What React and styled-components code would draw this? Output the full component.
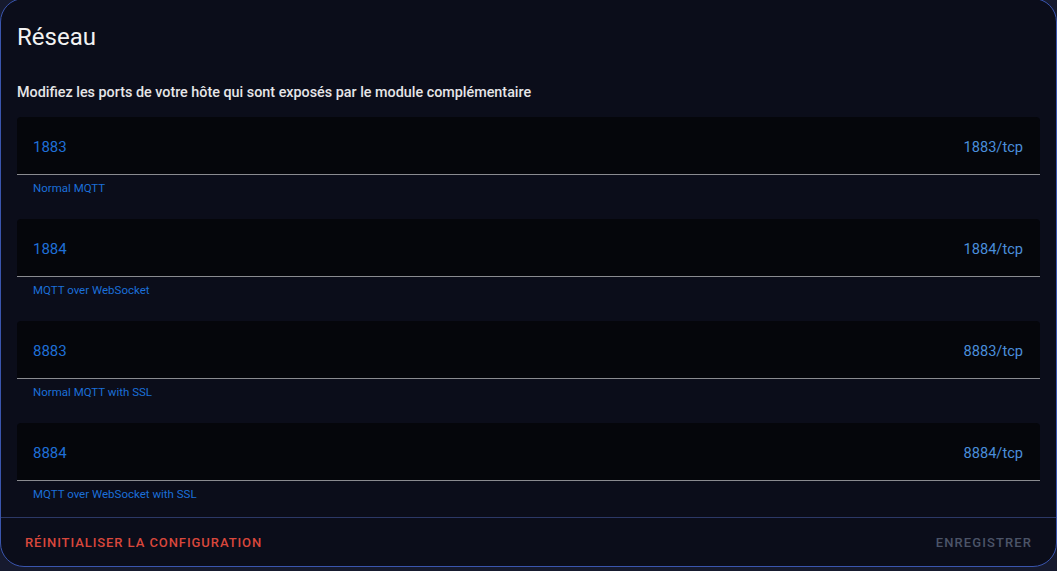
import React from "react";
import styled, { createGlobalStyle } from "styled-components";

const Global = createGlobalStyle`
  html, body { margin: 0; padding: 0; background: #161a2e; }
  body { font-family: Roboto, "Noto Sans", "Liberation Sans", sans-serif; overflow: hidden; }
  * { box-sizing: border-box; }
`;

const Card = styled.div`
  margin-top: -2px;
  width: 1057px;
  background: #0b0d1a;
  border: 1px solid #3a55ad;
  border-radius: 24px;
  overflow: hidden;
`;

const Body = styled.div`
  padding: 22px 16px 15px;
`;

const Title = styled.h1`
  margin: 0 0 30px;
  font-size: 24px;
  line-height: 32px;
  font-weight: 400;
  color: #f2f2f2;
`;

const Subtitle = styled.p`
  margin: 0 0 14px;
  font-size: 14.35px;
  line-height: 20px;
  font-weight: 500;
  color: #e6e6e8;
`;

const List = styled.div`
  display: flex;
  flex-direction: column;
  gap: 23px;
`;

const FieldWrap = styled.div`
  display: flex;
  flex-direction: column;
`;

const Field = styled.div`
  display: flex;
  align-items: center;
  justify-content: space-between;
  height: 58px;
  padding: 2px 17px 0 16px;
  background: #05060b;
  border-bottom: 1px solid #8a8b90;
  border-radius: 4px 4px 0 0;
`;

const Value = styled.span`
  font-size: 15px;
  color: #1f6fd6;
`;

const Suffix = styled.span`
  font-size: 14.6px;
  color: #4a8edb;
`;

const Helper = styled.div`
  padding: 5px 16px 0;
  font-size: 11.5px;
  line-height: 16px;
  color: #1b6fd8;
`;

const Footer = styled.div`
  display: flex;
  align-items: center;
  justify-content: space-between;
  height: 49px;
  padding: 0 16px;
  border-top: 1px solid #2c3866;
`;

const Button = styled.button`
  background: none;
  border: none;
  padding: 0 8px;
  height: 36px;
  font-family: inherit;
  font-size: 13px;
  font-weight: 500;
  letter-spacing: ${(p) => (p.$danger ? "0.93px" : "1.1px")};
  text-transform: uppercase;
  color: ${(p) => (p.$danger ? "#d9473c" : "#4b5468")};
  cursor: pointer;
`;

const ports = [
  { port: "1883", proto: "1883/tcp", desc: "Normal MQTT" },
  { port: "1884", proto: "1884/tcp", desc: "MQTT over WebSocket" },
  { port: "8883", proto: "8883/tcp", desc: "Normal MQTT with SSL" },
  { port: "8884", proto: "8884/tcp", desc: "MQTT over WebSocket with SSL" },
];

export default function App() {
  return (
    <>
      <Global />
      <Card>
        <Body>
          <Title>Réseau</Title>
          <Subtitle>
            Modifiez les ports de votre hôte qui sont exposés par le module complémentaire
          </Subtitle>
          <List>
            {ports.map((p) => (
              <FieldWrap key={p.port}>
                <Field>
                  <Value>{p.port}</Value>
                  <Suffix>{p.proto}</Suffix>
                </Field>
                <Helper>{p.desc}</Helper>
              </FieldWrap>
            ))}
          </List>
        </Body>
        <Footer>
          <Button $danger>Réinitialiser la configuration</Button>
          <Button>Enregistrer</Button>
        </Footer>
      </Card>
    </>
  );
}
